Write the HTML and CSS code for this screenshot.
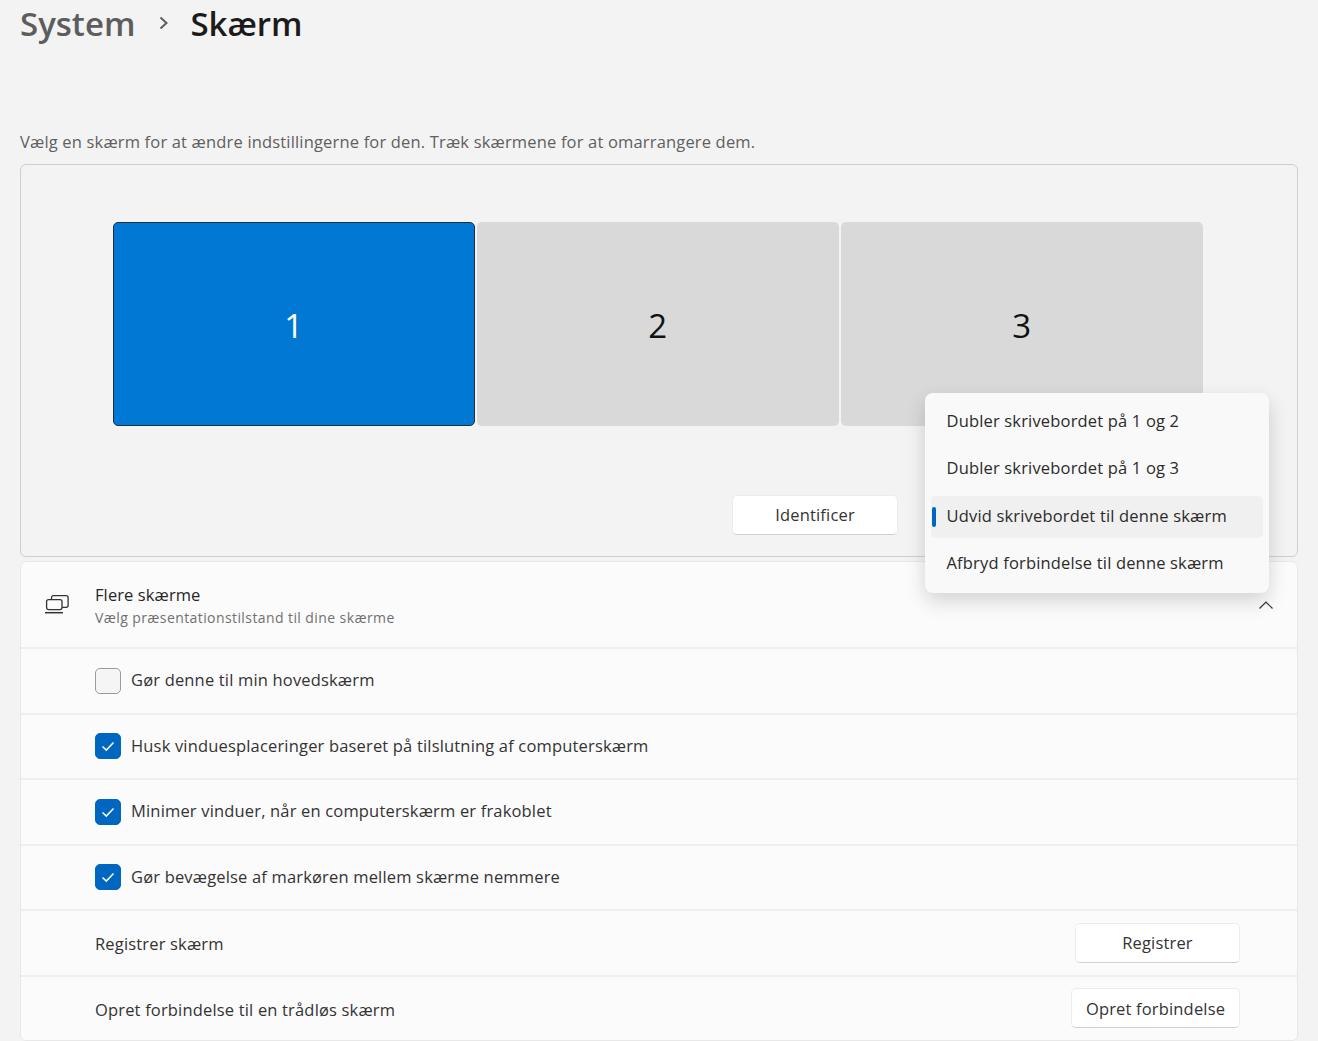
FILE: index.html
```html
<!DOCTYPE html>
<html lang="da">
<head>
<meta charset="utf-8">
<title>Skærm</title>
<link rel="stylesheet" href="styles.css">
</head>
<body>
<main class="page">
  <header class="crumbs">
    <span class="crumb-parent">System</span>
    <svg class="crumb-sep" width="12" height="16" viewBox="0 0 12 16"><path d="M2.5 2.5L8.5 8l-6 5.5" fill="none" stroke="#5d5d5d" stroke-width="2"/></svg>
    <span class="crumb-current">Skærm</span>
  </header>
  <p class="hint">Vælg en skærm for at ændre indstillingerne for den. Træk skærmene for at omarrangere dem.</p>
  <section class="arrange">
    <div class="monitors">
      <div class="monitor active">1</div>
      <div class="monitor">2</div>
      <div class="monitor">3</div>
    </div>
    <div class="arrange-actions">
      <button class="btn btn-identify">Identificer</button>
    </div>
  </section>
  <section class="card">
    <div class="row row-head">
      <svg class="row-icon" width="26" height="22" viewBox="0 0 26 22" fill="none" stroke="#333" stroke-width="1.3"><rect x="7.5" y="2.7" width="16.6" height="11.6" rx="2"/><rect x="2.6" y="6.6" width="15.4" height="10" rx="2" fill="#fbfbfb"/><path d="M1 19.7h18" stroke-width="1.5"/></svg>
      <div class="head-text">
        <div class="head-title">Flere skærme</div>
        <div class="head-sub">Vælg præsentationstilstand til dine skærme</div>
      </div>
      <svg class="chev" width="16" height="10" viewBox="0 0 16 10"><path d="M1.5 8.5L8 2l6.5 6.5" fill="none" stroke="#333" stroke-width="1.2"/></svg>
    </div>
    <div class="row row-check"><span class="box"></span><span class="label">Gør denne til min hovedskærm</span></div>
    <div class="row row-check"><span class="box checked"><svg width="16" height="16" viewBox="0 0 16 16"><path d="M2.5 8.5l3.8 3.6 7.2-7.6" fill="none" stroke="#fff" stroke-width="1.5"/></svg></span><span class="label">Husk vinduesplaceringer baseret på tilslutning af computerskærm</span></div>
    <div class="row row-check"><span class="box checked"><svg width="16" height="16" viewBox="0 0 16 16"><path d="M2.5 8.5l3.8 3.6 7.2-7.6" fill="none" stroke="#fff" stroke-width="1.5"/></svg></span><span class="label">Minimer vinduer, når en computerskærm er frakoblet</span></div>
    <div class="row row-check"><span class="box checked"><svg width="16" height="16" viewBox="0 0 16 16"><path d="M2.5 8.5l3.8 3.6 7.2-7.6" fill="none" stroke="#fff" stroke-width="1.5"/></svg></span><span class="label">Gør bevægelse af markøren mellem skærme nemmere</span></div>
    <div class="row row-action"><span class="label">Registrer skærm</span><button class="btn btn-register">Registrer</button></div>
    <div class="row row-action"><span class="label">Opret forbindelse til en trådløs skærm</span><button class="btn btn-connect">Opret forbindelse</button></div>
  </section>
  <div class="menu">
    <div class="menu-item">Dubler skrivebordet på 1 og 2</div>
    <div class="menu-item">Dubler skrivebordet på 1 og 3</div>
    <div class="menu-item selected">Udvid skrivebordet til denne skærm</div>
    <div class="menu-item">Afbryd forbindelse til denne skærm</div>
  </div>
</main>
</body>
</html>
```

FILE: styles.css
```css
* { box-sizing: border-box; }
html, body { margin: 0; height: 100%; overflow: hidden; }
body {
  background: #f3f3f3;
  color: #1c1c1c;
  font-family: "Open Sans", "Noto Sans", "Liberation Sans", sans-serif;
  font-size: 16.5px;
  letter-spacing: .17px;
}
.page { position: relative; width: 1318px; height: 1041px; padding: 0 20px; overflow: hidden; }
.crumbs { display: flex; align-items: center; height: 47px; font-size: 33px; font-weight: 600; letter-spacing: 0; }
.crumb-parent { color: #5d5d5d; }
.crumb-sep { margin: 0 20px 2px 23px; }
.crumb-current { color: #1b1b1b; }
.hint { margin: 83px 0 0; height: 24px; line-height: 24px; color: #5f5f5f; }
.arrange {
  margin-top: 10px;
  height: 393px;
  background: #f3f3f3;
  border: 1px solid #cfcfcf;
  border-radius: 6px;
  padding: 57px 0 0 92px;
}
.monitors { display: flex; gap: 2.5px; }
.monitor {
  width: 361.5px;
  height: 204px;
  padding-top: 3px;
  border-radius: 5px;
  background: #d9d9d9;
  display: flex;
  align-items: center;
  justify-content: center;
  font-size: 33px;
  letter-spacing: 0;
  color: #111;
}
.monitor.active { background: #0078d4; color: #fff; border: 1px solid #222f3a; }
.arrange-actions { margin-top: 68.5px; padding-left: 619px; }
.btn {
  font: inherit;
  letter-spacing: inherit;
  color: #333;
  background: #fff;
  border: 1px solid #ececec;
  border-bottom-color: #cfcfcf;
  border-radius: 5px;
  height: 40px;
  padding: 0;
}
.btn-identify { width: 166px; }
.btn-register { width: 165px; margin-right: 57px; }
.btn-connect { width: 169px; margin-right: 57px; }
.card {
  margin-top: 4px;
  background: #fbfbfb;
  border: 1px solid #e8e8e8;
  border-radius: 6px;
}
.row { display: flex; align-items: center; border-top: 2px solid #eeeeee; height: 65.5px; padding-left: 74px; }
.row-head { border-top: 0; height: 85px; padding-left: 23px; }
.row-icon { flex: none; margin-right: 25px; margin-top: -1px; }
.head-text { flex: 1; padding-top: 1px; }
.head-title { line-height: 24px; color: #262626; letter-spacing: .1px; }
.head-sub { font-size: 14px; line-height: 20px; margin-top: 1px; color: #707070; letter-spacing: .41px; }
.chev { margin-right: 23px; margin-top: 1px; }
.box {
  flex: none;
  display: flex;
  align-items: center;
  justify-content: center;
  width: 26px;
  height: 26px;
  margin-right: 10px;
  border: 1px solid #9a9a9a;
  border-radius: 5px;
  background: #f5f5f5;
}
.box.checked { background: #0067c0; border-color: #0067c0; }
.label { color: #333; }
.row-check .label { margin-top: -2px; }
.row-action { justify-content: space-between; }
.row-action .label { padding-top: 2px; }
.menu {
  position: absolute;
  left: 925px;
  top: 393px;
  width: 344px;
  height: 200px;
  padding: 8px 6px 0;
  background: #f9f9f9;
  border-radius: 8px;
  box-shadow: 0 8px 20px rgba(0, 0, 0, .16);
}
.menu-item {
  position: relative;
  display: flex;
  align-items: center;
  height: 42px;
  margin-bottom: 5.5px;
  padding: 0 0 4px 15.5px;
  border-radius: 5px;
  color: #2b2b2b;
}
.menu-item.selected { background: #f0f0f0; }
.menu-item.selected::before {
  content: "";
  position: absolute;
  left: 1px;
  top: 11px;
  width: 4px;
  height: 20px;
  border-radius: 2px;
  background: #0067c0;
}
```
